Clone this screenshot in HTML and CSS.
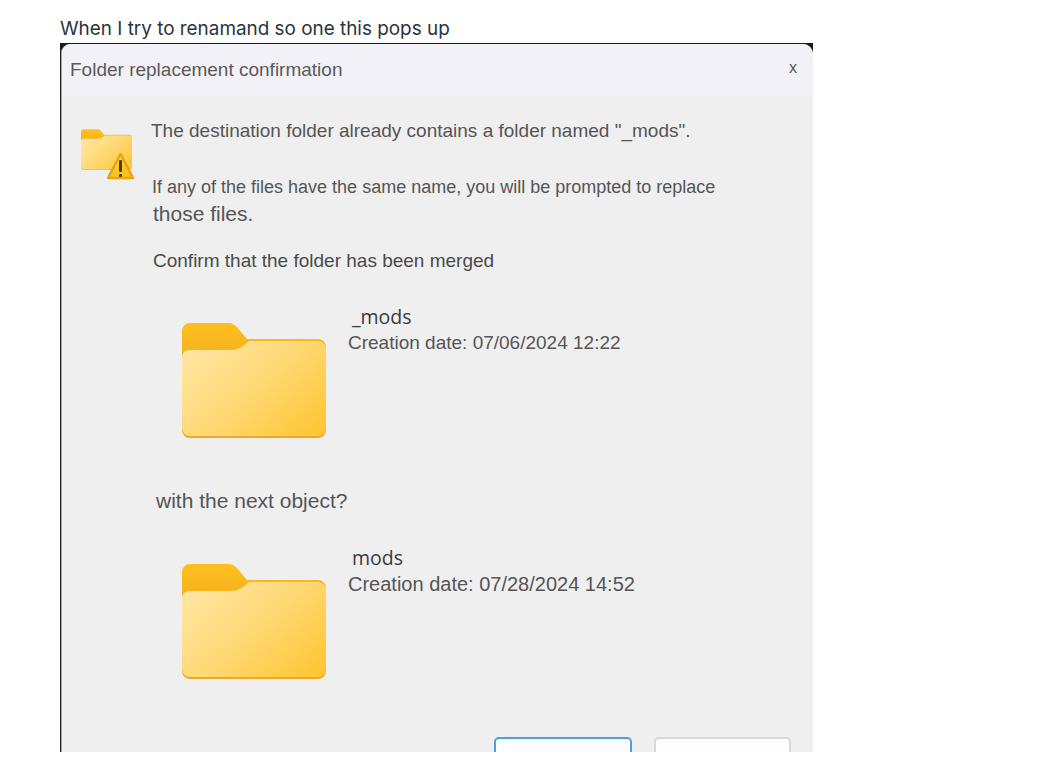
FILE: index.html
```html
<!DOCTYPE html>
<html lang="en">
<head>
  <meta charset="UTF-8">
  <title>Folder replacement confirmation</title>
  <link rel="stylesheet" href="styles.css">
</head>
<body>
  <svg class="defs" width="0" height="0">
    <defs>
      <linearGradient id="folderBack" gradientUnits="userSpaceOnUse" x1="0" y1="0" x2="0" y2="115">
        <stop offset="0" stop-color="#ffc01e"/>
        <stop offset="0.3" stop-color="#f2b11e"/>
        <stop offset="1" stop-color="#eba92c"/>
      </linearGradient>
      <linearGradient id="folderFront" gradientUnits="userSpaceOnUse" x1="20" y1="10" x2="125" y2="125">
        <stop offset="0" stop-color="#ffe6a3"/>
        <stop offset="0.5" stop-color="#ffd873"/>
        <stop offset="1" stop-color="#ffc531"/>
      </linearGradient>
      <linearGradient id="warnFill" x1="0" y1="0" x2="0" y2="1">
        <stop offset="0" stop-color="#ffd83a"/>
        <stop offset="1" stop-color="#fbbf17"/>
      </linearGradient>
      <symbol id="folder" viewBox="0 0 144 115">
        <path d="M0 8a8 8 0 0 1 8-8h38c4 0 7 2 9 4l10 12h71a8 8 0 0 1 8 8v83a8 8 0 0 1-8 8H8a8 8 0 0 1-8-8z" fill="url(#folderBack)"/>
        <path d="M0 35c0-5 3-8 8-8h39c6 0 10-1 14-4 3-2 5-5 8-5h67a8 8 0 0 1 8 8v79a8 8 0 0 1-8 8H8a8 8 0 0 1-8-8z" fill="url(#folderFront)"/>
      </symbol>
    </defs>
  </svg>

  <p class="post-text">When I try to renamand so one this pops up</p>

  <div class="dialog">
    <div class="dialog-inner">
      <div class="title-bar">
        <span class="title">Folder replacement confirmation</span>
        <span class="close">x</span>
      </div>

      <div class="content">
        <div class="intro">
          <div class="warn-icon">
            <svg class="small-folder" width="51" height="41"><use href="#folder"/></svg>
            <svg class="warning" width="28" height="28" viewBox="0 0 28 28">
              <path d="M13.5 2 26 26H1z" fill="url(#warnFill)" stroke="#e6a512" stroke-width="2.5" stroke-linejoin="round"/>
              <rect x="12" y="8" width="3" height="12" rx="1" fill="#4a3b12"/>
              <rect x="12" y="22" width="3" height="3" rx="1" fill="#4a3b12"/>
            </svg>
          </div>
          <p class="heading">The destination folder already contains a folder named "_mods".</p>
        </div>

        <p class="note">If any of the files have the same name, you will be prompted to replace</p>
        <p class="note-end">those files.</p>
        <p class="confirm">Confirm that the folder has been merged</p>

        <div class="item">
          <svg class="big-folder" width="144" height="115"><use href="#folder"/></svg>
          <div class="item-info">
            <div class="item-name">_mods</div>
            <div class="item-date">Creation date: 07/06/2024 12:22</div>
          </div>
        </div>

        <p class="question">with the next object?</p>

        <div class="item">
          <svg class="big-folder" width="144" height="115"><use href="#folder"/></svg>
          <div class="item-info">
            <div class="item-name">mods</div>
            <div class="item-date date-wide">Creation date: 07/28/2024 14:52</div>
          </div>
        </div>

        <div class="buttons">
          <div class="btn btn-primary"></div>
          <div class="btn"></div>
        </div>
      </div>
    </div>
  </div>
</body>
</html>
```
FILE: styles.css
```css
html, body {
  height: 100%;
}

body {
  margin: 0;
  padding: 0 0 22px 60px;
  box-sizing: border-box;
  background: #fff;
  font-family: "Liberation Sans", Arial, sans-serif;
  overflow: hidden;
  display: flex;
  flex-direction: column;
}

.defs {
  position: absolute;
}

p {
  margin: 0;
}

.post-text {
  height: 43px;
  padding-top: 18px;
  box-sizing: border-box;
  font-family: Inter, sans-serif;
  font-size: 18.9px;
  line-height: 22px;
  color: #2b333b;
}

.dialog {
  flex: 1;
  width: 753px;
  overflow: hidden;
  background: #1c1c1c;
  padding: 1px 0 0 1px;
  box-sizing: border-box;
}

.dialog-inner {
  height: 100%;
  overflow: hidden;
  border-left: 1px solid #a8a8a8;
  border-radius: 9px 10px 0 0;
  background: #efefef;
}

.title-bar {
  height: 52px;
  background: #f3f1f8;
  display: flex;
  align-items: center;
  justify-content: space-between;
  padding: 0 15px 0 8px;
}

.title {
  font-size: 19px;
  color: #5a5a5a;
}

.close {
  font-size: 16px;
  color: #555;
  margin-top: -5px;
  margin-right: 1px;
}

.content {
  padding: 25px 0 0 19px;
  color: #555;
}

.intro {
  display: flex;
  gap: 19px;
  height: 56px;
}

.warn-icon {
  position: relative;
  width: 51px;
  height: 41px;
  margin-top: 8px;
}

.warning {
  position: absolute;
  left: 26px;
  top: 23px;
}

.heading {
  font-size: 19px;
  line-height: 20px;
}

.note {
  margin-left: 71px;
  font-size: 18px;
  line-height: 20px;
}

.note-end {
  margin: 7px 0 0 72px;
  font-size: 21px;
  line-height: 20px;
}

.confirm {
  margin: 27px 0 45px 72px;
  font-size: 19px;
  line-height: 20px;
  color: #4a4a4a;
}

.item {
  display: flex;
  margin-left: 101px;
  gap: 22px;
}

.big-folder {
  margin-top: 7px;
  flex: none;
}

.item-info {
  margin-top: -12px;
}

.item-name {
  font-family: "Open Sans", sans-serif;
  font-size: 19.5px;
  line-height: 26px;
  margin-left: 4px;
  color: #3a3a3a;
}

.item-date {
  font-size: 19px;
  line-height: 26px;
}

.date-wide {
  font-size: 20px;
}

.question {
  margin: 51px 0 44px 75px;
  font-size: 21px;
  line-height: 24px;
}

.buttons {
  display: flex;
  gap: 22px;
  margin: 58px 0 0 413px;
}

.btn {
  width: 137px;
  height: 40px;
  box-sizing: border-box;
  background: #fdfdfd;
  border: 2px solid #d8d8d8;
  border-radius: 5px;
}

.btn-primary {
  width: 138px;
  border-color: #4a9fe0;
}
```
